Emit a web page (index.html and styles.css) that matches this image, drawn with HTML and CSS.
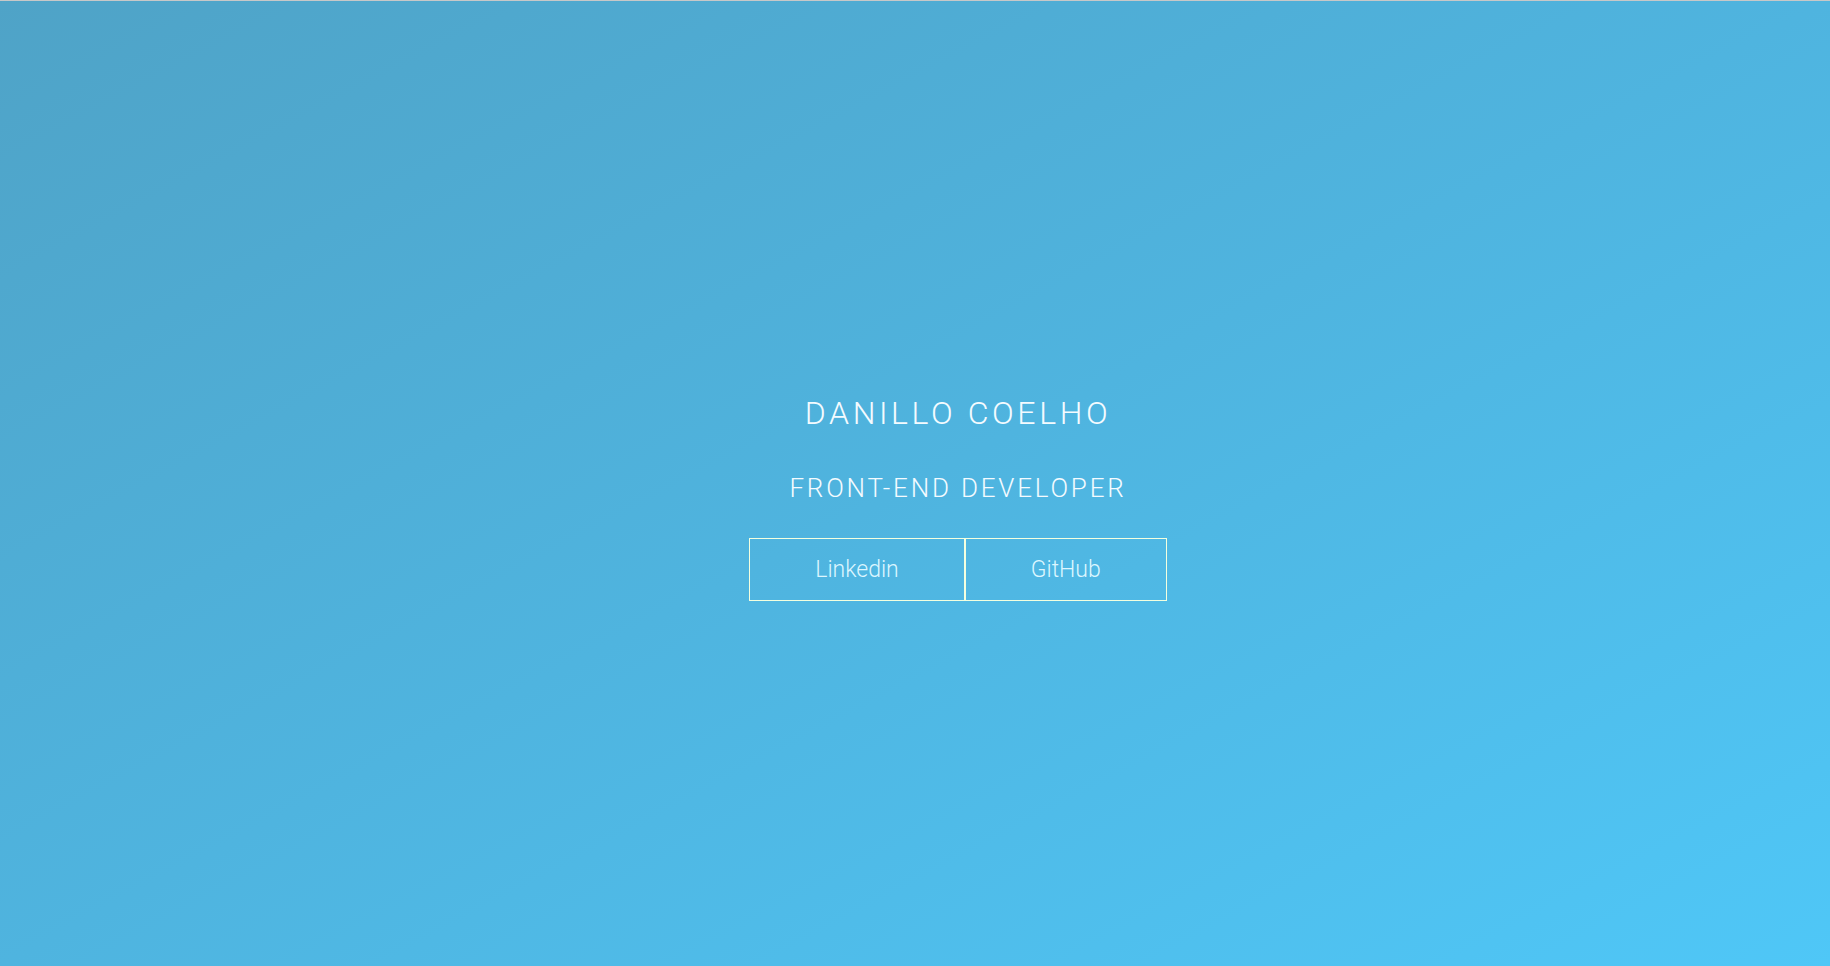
FILE: index.html
```html
<!DOCTYPE html>
<html lang="en">
<head>
<meta charset="utf-8">
<title>Danillo Coelho</title>
<link rel="stylesheet" href="styles.css">
</head>
<body>
<main class="hero">
  <div class="content">
    <h1 class="name">DANILLO COELHO</h1>
    <h2 class="role">FRONT-END DEVELOPER</h2>
    <nav class="links">
      <a class="btn" href="#">Linkedin</a>
      <a class="btn" href="#">GitHub</a>
    </nav>
  </div>
</main>
</body>
</html>
```

FILE: styles.css
```css
* { box-sizing: border-box; }
html, body { margin: 0; padding: 0; }
body {
  font-family: Roboto, "Liberation Sans", sans-serif;
  overflow: hidden;
}
.hero {
  height: 966px;
  border-top: 1px solid #c8c8c8;
  background: linear-gradient(to bottom right, #4fa3c7 0%, #4fb4df 50%, #4fc7f7 100%);
  display: flex;
  justify-content: center;
  padding-left: 86px;
  padding-top: 392px;
}
.content {
  display: flex;
  flex-direction: column;
  align-items: center;
}
.name {
  margin: 0;
  font-size: 32px;
  line-height: 40px;
  font-weight: 300;
  letter-spacing: 3.6px;
  color: #f4fbff;
}
.role {
  margin: 40px 0 0;
  font-size: 26px;
  line-height: 30px;
  font-weight: 300;
  letter-spacing: 2.8px;
  color: #f4fbff;
}
.links {
  display: flex;
  margin-top: 35px;
}
.btn {
  display: block;
  border: 1px solid #f3ffdf;
  padding: 15px 65px;
  font-size: 23px;
  line-height: 31px;
  font-weight: 300;
  color: #dcf6ff;
  text-decoration: none;
}
```
